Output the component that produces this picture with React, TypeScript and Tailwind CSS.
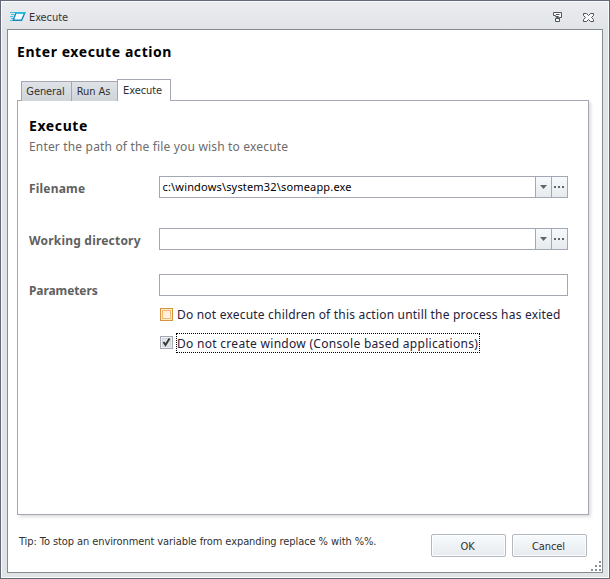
import { ReactNode } from 'react';

const tahoma = "font-['DejaVu_Sans_Condensed','DejaVu_Sans',sans-serif] [font-stretch:condensed]";

function TitleBar() {
  return (
    <header className="flex h-7 items-start pl-2 pt-[8px]">
      <svg width="17" height="16" viewBox="0 0 17 16" className="shrink-0">
        <path d="M1 3.5h5M2 5.5h3M1 7.5h3M2 9.5h2M1 11.5h2" stroke="#35c5e2" />
        <path d="M7 3.8h8.8l-3.2 7.4H4.2z" fill="#f5fcff" stroke="#1689bd" strokeWidth="1.4" />
        <path d="M6.5 3.8h9.5" stroke="#19bfdf" strokeWidth="1.6" />
      </svg>
      <span className={`${tahoma} ml-[3px] pt-px text-[11px] leading-4 tracking-[-0.08px] text-[#343434]`}>Execute</span>
      <div className="ml-auto flex pr-[14px] pt-[2px]">
        <svg width="12" height="13" viewBox="0 0 12 13" fill="none" stroke="#50565f" className="mr-[19px]">
          <path d="M1.5 1.5h8v5h-2v4h-4v-3h1v-1h2v-1h-3v-1h-2z" fill="#f8f9fa" />
          <path d="M4 3.5h3.5M3.5 7.5h4" />
        </svg>
        <svg width="12" height="13" viewBox="0 0 12 13" fill="#fafafa" stroke="#50505a">
          <path d="M.5 2.5h3l2 2 2-2h3v2l-2 2 2 2v2h-3l-2-2-2 2h-3v-2l2-2-2-2z" />
        </svg>
      </div>
    </header>
  );
}

function Tab({ className, children }: { className: string; children: ReactNode }) {
  return (
    <div
      className={`${tahoma} border border-b-0 border-[#a3a8b4] text-center text-[11px] tracking-[-0.1px] text-[#303030] ${className}`}
    >
      {children}
    </div>
  );
}

function PathInput({ value = '' }: { value?: string }) {
  return (
    <div className="flex h-[22px] w-[409px] border border-[#a3a8b4] bg-white">
      <div className="flex-1 pl-[2.5px] text-[11px] leading-[19px] tracking-[0.17px] text-black">{value}</div>
      <div className="flex w-[16px] items-center justify-center border-l border-[#a3a8b4] bg-linear-to-b from-[#f6fafc] to-[#e6ebee]">
        <svg width="7" height="4" viewBox="0 0 7 4">
          <path d="M0 0h7L3.5 4z" fill="#60666e" />
        </svg>
      </div>
      <div className="flex w-[16px] items-center justify-center gap-[2px] border-l border-[#a3a8b4] bg-linear-to-b from-[#f6fafc] to-[#e6ebee] pr-px">
        <i className="size-[2px] bg-[#60666e]" />
        <i className="size-[2px] bg-[#60666e]" />
        <i className="size-[2px] bg-[#60666e]" />
      </div>
    </div>
  );
}

function Field({ label, children }: { label: string; children: ReactNode }) {
  return (
    <div className="flex h-[22px] items-start">
      <div className="w-[130px] shrink-0 whitespace-nowrap pt-[4px] text-[12px] leading-[18px] font-bold tracking-[0.2px] text-[#606060]">
        {label}
      </div>
      {children}
    </div>
  );
}

function DialogButton({ children }: { children: ReactNode }) {
  return (
    <button
      className={`${tahoma} h-[23px] w-[75px] rounded-[2px] border border-[#b3b8be] bg-linear-to-b from-[#f7fbfd] to-[#e7eaee] pt-[2px] pr-[2px] text-[11px] leading-[20px] tracking-[-0.08px] text-[#303030] shadow-[inset_0_0_0_1px_#fbfdfe]`}
    >
      {children}
    </button>
  );
}

export default function App() {
  return (
    <div className="flex h-[579px] w-[610px] flex-col overflow-hidden border border-[#626875] bg-linear-to-b from-[#ebecf0] from-0% to-[#e1e4e7] to-[30px] font-['Noto_Sans',sans-serif] shadow-[inset_0_0_0_1px_#fafbfc]">
      <TitleBar />
      <main className="relative mx-[6px] mb-[5px] flex flex-1 flex-col border border-[#858b91] bg-white pl-[9px] pr-[13px]">
        <h1 className="mt-[12px] text-[14px] leading-5 font-bold tracking-[0.57px] text-black">Enter execute action</h1>

        {/* Tab strip */}
        <div className="z-10 mt-[17px] -mb-px flex h-[22px] items-end pl-1">
          <Tab className="h-[20px] w-[51px] bg-linear-to-b from-[#dfe3e7] to-[#cfd4d9] pr-[2px] leading-[19px]">General</Tab>
          <Tab className="-ml-px h-[20px] w-[47px] bg-linear-to-b from-[#dfe3e7] to-[#cfd4d9] pr-[2px] leading-[19px]">Run As</Tab>
          <Tab className="-ml-px h-[22px] w-[54px] bg-white pr-[3px] leading-[21px]">Execute</Tab>
        </div>

        <section className="h-[415px] w-[572px] border border-[#a3a8b4] pl-[11px] shadow-[2px_2px_3px_#00000022]">
          <h2 className="mt-[15px] text-[14px] leading-5 font-bold tracking-[0.6px] text-black">Execute</h2>
          <p className="pt-px text-[12px] leading-[20px] tracking-[0.17px] text-[#6c6c6c]">
            Enter the path of the file you wish to execute
          </p>

          <div className="mt-[19px]">
            <Field label="Filename">
              <PathInput value={'c:\\windows\\system32\\someapp.exe'} />
            </Field>
          </div>
          <div className="mt-[30px]">
            <Field label="Working directory">
              <PathInput />
            </Field>
          </div>
          <div className="mt-[24px] flex h-[22px] items-start">
            <div className="w-[130px] pt-[8px] text-[12px] leading-[18px] font-bold tracking-[-0.1px] text-[#606060]">
              Parameters
            </div>
            <div className="h-[22px] w-[409px] border border-[#a3a8b4]" />
          </div>

          <div className="mt-[8px] ml-[131px] flex h-[21px] items-start">
            <span className="mt-[4px] flex size-[13px] items-center justify-center border border-[#d29340] bg-[#ffedc5]">
              <span className="size-[9px] border border-[#f8b572] bg-linear-to-br from-[#ffe9c8] to-[#fffaf0]" />
            </span>
            <span className="ml-1 pt-px text-[12px] leading-5 tracking-[0.2px] whitespace-nowrap text-[#24213b]">
              Do not execute children of this action untill the process has exited
            </span>
          </div>
          <div className="mt-[8px] ml-[131px] flex h-[20px] items-start">
            <span className="mt-[3px] flex size-[13px] items-center justify-center border border-[#a3a8b4] bg-[#eef0f2]">
              <svg width="11" height="11" viewBox="0 0 11 11" fill="none">
                <path d="M1.5 1.5h8v8h-8z" fill="#e3e5e8" stroke="#d2d5da" />
                <path d="M2.5 5l2 3 4-6.5" stroke="#383838" strokeWidth="2" />
              </svg>
            </span>
            <span className="ml-[3px] h-5 w-[304px] border border-dotted border-black text-[12px] leading-[19px] tracking-[0.29px] whitespace-nowrap text-[#24213b]">
              Do not create window (Console based applications)
            </span>
          </div>
        </section>

        <footer className="mt-[19px] flex pl-[2px]">
          <span className={`${tahoma} flex-1 pt-px text-[11px] leading-[14px] tracking-[-0.085px] text-[#303030]`}>
            Tip: To stop an environment variable from expanding replace % with %%.
          </span>
          <div className="flex gap-[6px] pr-[2px]">
            <DialogButton>OK</DialogButton>
            <DialogButton>Cancel</DialogButton>
          </div>
        </footer>

        {/* Resize grip */}
        <svg width="10" height="10" viewBox="0 0 10 10" fill="#8c9198" className="absolute right-[1px] bottom-[1px]">
          <path d="M8 0h2v2h-2zM4 4h2v2h-2zM8 4h2v2h-2zM0 8h2v2h-2zM4 8h2v2h-2zM8 8h2v2h-2z" />
        </svg>
      </main>
    </div>
  );
}
